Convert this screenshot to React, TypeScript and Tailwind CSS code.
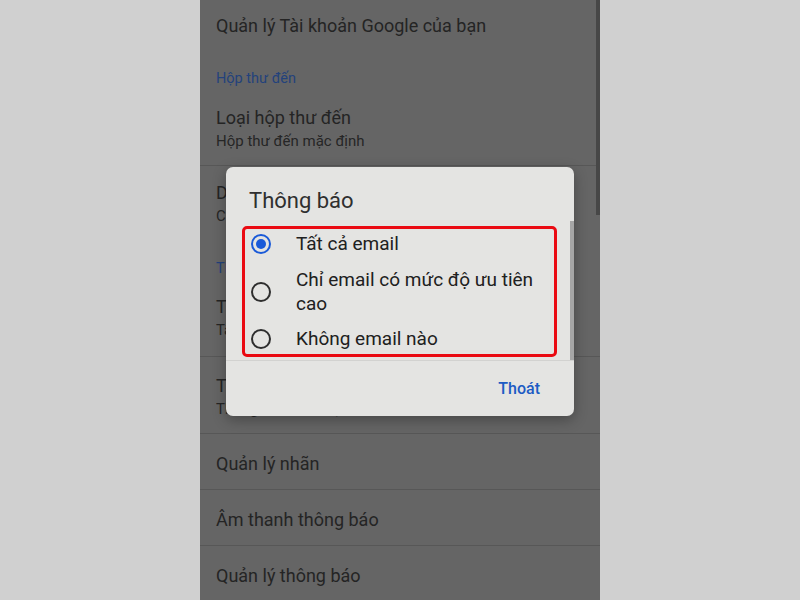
const font = { fontFamily: "Roboto, 'Noto Sans', sans-serif" };

type Choice = { label: string; checked?: boolean; gap: string };

const choices: Choice[] = [
  { label: "Tất cả email", checked: true, gap: "" },
  { label: "Chỉ email có mức độ ưu tiên cao", gap: "mt-[12px]" },
  { label: "Không email nào", gap: "mt-[11px]" },
];

const Radio = ({ checked }: { checked?: boolean }) =>
  checked ? (
    <span className="w-[20px] h-[20px] rounded-full border-2 border-[#1a5ad8] flex items-center justify-center shrink-0">
      <span className="w-[10px] h-[10px] rounded-full bg-[#1a5ad8]" />
    </span>
  ) : (
    <span className="w-[20px] h-[20px] rounded-full border-2 border-[#2e2e2e] shrink-0" />
  );

const TwoLine = ({ title, sub, pb = "pb-[13px]", border = true }: { title: string; sub: string; pb?: string; border?: boolean }) => (
  <div className={`px-4 pt-[17px] ${pb} ${border ? "border-b border-[#575757]" : ""}`}>
    <div className="text-[18px] leading-[24px] text-[#242424] whitespace-nowrap">{title}</div>
    <div className="text-[15px] leading-[22px] text-[#262626] whitespace-nowrap">{sub}</div>
  </div>
);

const OneLine = ({ title, border = true }: { title: string; border?: boolean }) => (
  <div className={`px-4 pt-[18px] pb-[13px] ${border ? "border-b border-[#575757]" : ""}`}>
    <div className="text-[18px] leading-[24px] text-[#242424]">{title}</div>
  </div>
);

const Header = ({ title }: { title: string }) => (
  <div className="px-4 pt-[20px] text-[14.5px] leading-[18px] text-[#23427c]">{title}</div>
);

export default function App() {
  return (
    <div className="w-[800px] h-[600px] flex justify-center bg-[#d0d0d0] overflow-hidden" style={font}>
      <div className="relative w-[400px] h-full bg-[#656565] overflow-hidden">
        {/* settings list behind the dialog */}
        <div className="h-[50px] px-4 flex items-center text-[18px] text-[#242424]">
          Quản lý Tài khoản Google của bạn
        </div>
        <Header title="Hộp thư đến" />
        <div className="pt-[1px]">
          <TwoLine title="Loại hộp thư đến" sub="Hộp thư đến mặc định" />
        </div>
        <div className="px-4 pt-[15px] pb-[13px]">
          <div className="text-[18px] leading-[24px] text-[#242424]">Danh mục hộp thư đến</div>
          <div className="text-[15px] leading-[22px] text-[#262626]">Chính, Mạng xã hội</div>
        </div>
        <Header title="Thông báo" />
        <TwoLine title="Thông báo" sub="Tất cả" pb="pb-[15px]" />
        <TwoLine title="Thông báo hộp thư đến" sub="Thông báo cho mọi thư" />
        <OneLine title="Quản lý nhãn" />
        <OneLine title="Âm thanh thông báo" />
        <OneLine title="Quản lý thông báo" border={false} />

        {/* page scrollbar */}
        <div className="absolute right-0 top-0 w-[4px] h-[215px] bg-[#474747]" />

        {/* notifications dialog */}
        <div className="absolute left-[26px] top-[167px] w-[348px] h-[249px] bg-[#e4e4e2] rounded-[7px] shadow-[0_4px_14px_rgba(0,0,0,0.3)] flex flex-col">
          <div className="pl-[23px] pt-[21px] h-[54px] text-[22px] leading-[26px] text-[#2f2f2f]">Thông báo</div>
          <div className="relative h-[140px] border-b border-[#d2d2d0] pl-[16px] pt-[5px]">
            <div className="w-[315px] border-[3px] border-[#ea0a12] rounded-[5px] pl-[6px] pt-[3px] pb-[3px] flex flex-col">
              {choices.map((c) => (
                <div key={c.label} className={`flex items-center ${c.gap}`}>
                  <div className="w-[45px] flex">
                    <Radio checked={c.checked} />
                  </div>
                  <div className="w-[250px] text-[19px] leading-[24px] text-[#202020]">{c.label}</div>
                </div>
              ))}
            </div>
            <div className="absolute right-0 top-0 w-[4px] h-full bg-[#a6a6a6]" />
          </div>
          <div className="flex-1 flex items-center justify-end pr-[34px]">
            <span className="text-[16px] font-medium text-[#1c5bc4]">Thoát</span>
          </div>
        </div>
      </div>
    </div>
  );
}
